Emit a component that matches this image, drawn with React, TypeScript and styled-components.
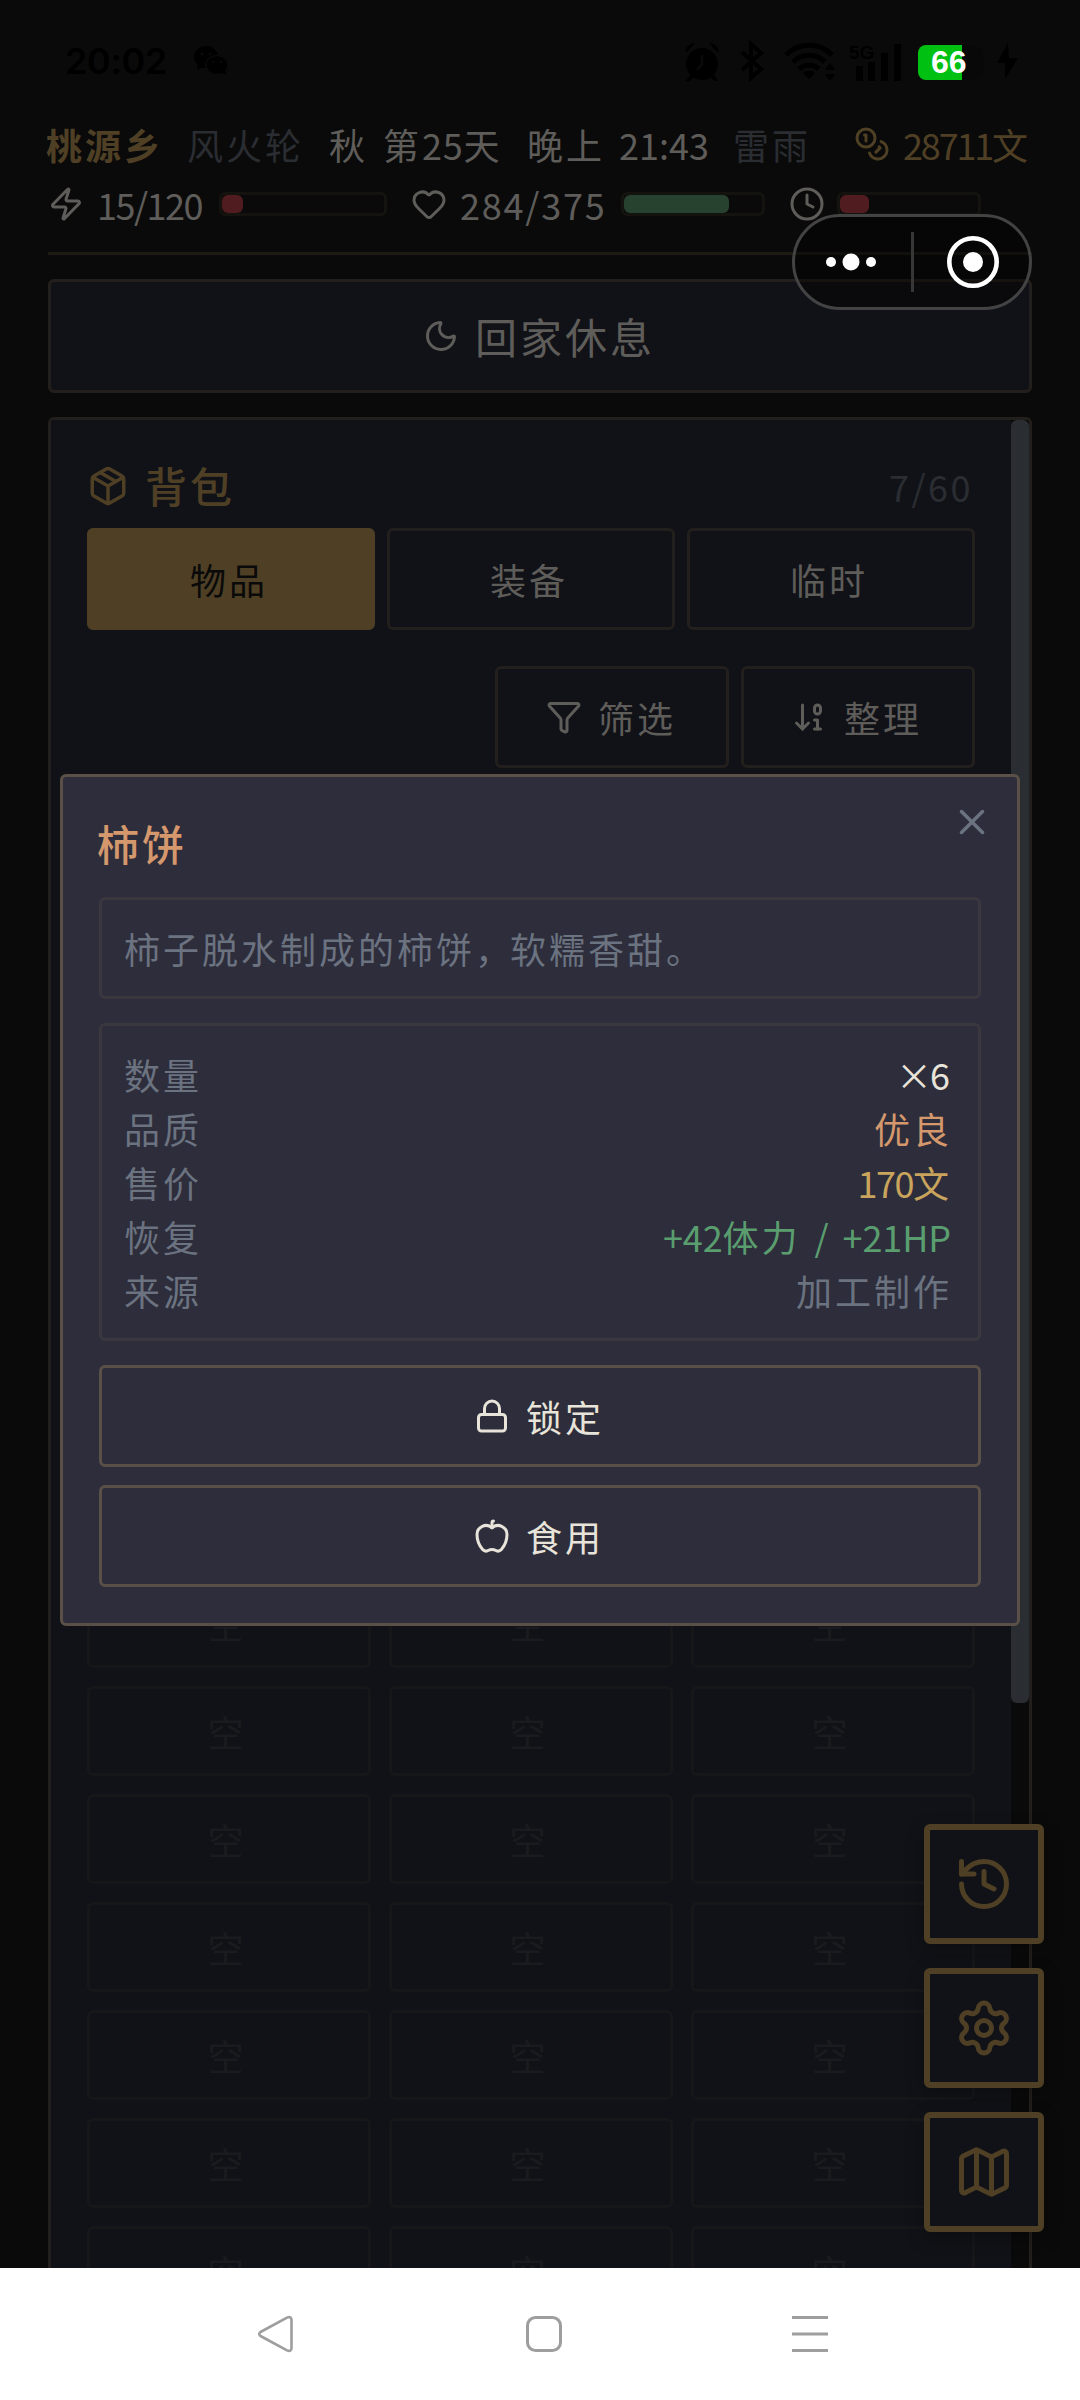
import React from 'react';
import styled, { createGlobalStyle } from 'styled-components';
import {
  Apple, ArrowDown01, Clock, Funnel, Heart, History, Lock, Map as MapIcon,
  Moon, Package, Settings, X, Zap,
} from 'lucide-react';

const c = {
  bg: '#0a0a0a',
  panel: '#111217',
  line: '#231f1c',
  headLine: '#1e1b14',
  text: '#5f5d5a',
  muted: '#2a2d32',
  gold: '#4f4025',
  faint: '#1a1b1f',
  faintLine: '#17171a',
  modal: '#2d2d3b',
  modalLine: '#5a5047',
  innerLine: '#3b373f',
  gray: '#6b7280',
  paper: '#e8e4d9',
};

const Global = createGlobalStyle`
  * { box-sizing: border-box; }
  body { margin: 0; background: ${c.bg}; }
  button { font: inherit; color: inherit; background: none; padding: 0; margin: 0; }
  svg { display: block; flex: none; }
`;

const Screen = styled.div`
  position: relative;
  width: 1080px;
  height: 2400px;
  overflow: hidden;
  display: flex;
  flex-direction: column;
  background: ${c.bg};
  font-family: 'Noto Sans CJK SC', 'Noto Sans', sans-serif;
  font-size: 36px;
  line-height: 48px;
  color: ${c.text};
`;

/* Mixed text: ideographs sit on a 39px grid, latin runs are set tighter. */
const Text = styled.span`
  margin: 0 2px 0 -2px;
`;
const Run = styled.span<{ $ls: number }>`
  letter-spacing: ${(p) => p.$ls}px;
  word-spacing: 6px;
  white-space: pre;
`;
const spacing = (run: string, latin: number) => {
  if (run === '，') return -1;
  return /[\u3000-\uffef]/.test(run) ? 3 : latin;
};
function Txt({ children, ls = 0.8 }: { children: string; ls?: number }) {
  const runs = children.match(/，|[\u3000-\uff0b\uff0d-\uffef]+|[^\u3000-\uffef]+/g) || [];
  return (
    <Text>
      {runs.map((r, i) => <Run key={i} $ls={spacing(r, ls)}>{r}</Run>)}
    </Text>
  );
}

/* ---------- system status bar ---------- */
const StatusBar = styled.div`
  height: 120px;
  padding: 2px 60px 0 65px;
  display: flex;
  align-items: center;
  justify-content: space-between;
  color: #000;
`;
const StatusSide = styled.div<{ $gap: number }>`
  display: flex;
  align-items: center;
  gap: ${(p) => p.$gap}px;
`;
const Time = styled.span`
  font: 600 36px/44px Inter, sans-serif;
  letter-spacing: -0.4px;
`;
const Battery = styled.div`
  width: 66px;
  height: 35px;
  margin: 2px -5px 0 -1px;
  border-radius: 8px 12px 12px 8px;
  background: linear-gradient(90deg, #00c011 0 44px, #080808 44px);
  color: #fff;
  font: 700 32px/35px 'Liberation Sans', Arial, sans-serif;
  letter-spacing: 0;
  padding-left: 13px;
`;

function StatusIcons() {
  return (
    <svg width="222" height="42" viewBox="0 0 222 42" fill="#000">
      <circle cx="20" cy="24" r="16" />
      <path d="M3 12a10 10 0 0 1 10-9l-8 9zM37 12A10 10 0 0 0 27 3l8 9zM8 35l-4 6h4l4-4zM32 35l4 6h-4l-4-4z" />
      <path d="M20 15v9l-5 6" stroke="#0a0a0a" strokeWidth="2.5" fill="none" />
      <path d="M60 12l19 17-10 9V4l10 9-19 17" stroke="#000" strokeWidth="4" fill="none" />
      <path d="M104 15c13-13 34-13 46 0M111 22c9-9 23-9 32 0M117 29c6-5 14-5 20 0" stroke="#000" strokeWidth="5" fill="none" />
      <path d="M127 39l-6-6c3-3 9-3 12 0zM148 23l5 7h-10zM148 41l5-7h-10z" />
      <text x="167" y="19" fontFamily="Liberation Sans, Arial" fontWeight="700" fontSize="19">5G</text>
      <path d="M174 26h7v15h-7zM186 22h7v19h-7zM199 13h7v28h-7zM212 4h7v37h-7z" />
    </svg>
  );
}

/* ---------- game header ---------- */
const Header = styled.header`
  margin: 0 48px;
  height: 135px;
  border-bottom: 3px solid ${c.headLine};
`;
const InfoRow = styled.div`
  display: flex;
  align-items: center;
  height: 48px;
`;
const Info = styled.span<{ $w?: number; $color?: string; $bold?: boolean }>`
  width: ${(p) => (p.$w ? `${p.$w}px` : 'auto')};
  color: ${(p) => p.$color || c.text};
  font-weight: ${(p) => (p.$bold ? 700 : 400)};
  white-space: nowrap;
`;
const Money = styled.div`
  display: flex;
  align-items: center;
  gap: 15px;
  margin: 0 -1px 0 auto;
  color: ${c.gold};
`;
const MeterRow = styled.div`
  display: flex;
  align-items: center;
  gap: 24px;
  height: 48px;
  margin-top: 13px;
  padding-bottom: 2px;
`;
const Meter = styled.div`
  display: flex;
  align-items: center;
  gap: 12px;
`;
const MeterText = styled.span<{ $w: number }>`
  width: ${(p) => p.$w}px;
  padding-left: 3px;
  white-space: nowrap;
`;
const Track = styled.div<{ $w: number }>`
  width: ${(p) => p.$w}px;
  height: 24px;
  border: 3px solid #14130f;
  border-radius: 6px;
`;
const Fill = styled.div<{ $color: string }>`
  height: 18px;
  border-radius: 6px;
  background: ${(p) => p.$color};
`;

function CoinsIcon() {
  return (
    <svg width="36" height="36" viewBox="0 0 24 24" fill="none" stroke="currentColor" strokeWidth="2" strokeLinecap="round" strokeLinejoin="round">
      <circle cx="8" cy="8" r="6" />
      <path d="M18.09 10.37A6 6 0 1 1 10.34 18M7 6h1v4M16.71 13.88l.7.71-2.82 2.82" />
    </svg>
  );
}

/* ---------- page body ---------- */
const RestButton = styled.button`
  margin: 24px 48px 0;
  height: 114px;
  flex: none;
  border: 3px solid ${c.line};
  border-radius: 6px;
  background: ${c.panel};
  display: flex;
  align-items: center;
  justify-content: center;
  gap: 18px;
  font-size: 42px;
`;
const Panel = styled.section`
  margin: 24px 48px 0;
  flex: 1;
  min-height: 0;
  overflow: hidden;
  display: flex;
  border: 3px solid ${c.line};
  border-bottom: 0;
  border-radius: 6px 6px 0 0;
`;
const PanelBody = styled.div`
  width: 960px;
  padding: 36px;
  background: ${c.panel};
`;
const Scrollbar = styled.div`
  width: 18px;
  background: ${c.bg};
`;
const Thumb = styled.div`
  height: 1283px;
  border-radius: 6px;
  background: #2a2d32;
`;
const PanelHead = styled.div`
  display: flex;
  align-items: center;
  justify-content: space-between;
  height: 60px;
`;
const PanelTitle = styled.h2`
  display: flex;
  align-items: center;
  gap: 18px;
  margin: 0;
  font-size: 42px;
  line-height: 46px;
  font-weight: 500;
  color: ${c.gold};

  ${Text} { padding-bottom: 2px; }
`;
const Tabs = styled.div`
  display: grid;
  grid-template-columns: repeat(3, 1fr);
  gap: 12px;
  margin-top: 12px;
`;
const Tab = styled.button<{ $on?: boolean }>`
  height: 102px;
  border: 3px solid ${(p) => (p.$on ? c.gold : c.line)};
  border-radius: 6px;
  background: ${(p) => (p.$on ? c.gold : 'transparent')};
  color: ${(p) => (p.$on ? '#0a0a0a' : c.text)};
`;
const Tools = styled.div`
  display: flex;
  justify-content: flex-end;
  gap: 12px;
  margin-top: 36px;
`;
const Tool = styled.button`
  width: 234px;
  height: 102px;
  border: 3px solid ${c.line};
  border-radius: 6px;
  display: flex;
  align-items: center;
  justify-content: center;
  gap: 18px;
`;
const Grid = styled.div`
  display: grid;
  grid-template-columns: repeat(3, 1fr);
  grid-auto-rows: 90px;
  gap: 18px;
  margin-top: 810px;
`;
const Slot = styled.div`
  display: flex;
  align-items: center;
  justify-content: center;
  border: 3px solid ${c.faintLine};
  border-radius: 6px;
  color: ${c.faint};
`;

/* ---------- floating layers ---------- */
const Capsule = styled.div`
  position: absolute;
  left: 792px;
  top: 214px;
  width: 240px;
  height: 96px;
  border: 3px solid #434343;
  border-radius: 48px;
  background: rgba(0, 0, 0, 0.4);
`;
const Fabs = styled.div`
  position: absolute;
  right: 36px;
  top: 1824px;
  display: flex;
  flex-direction: column;
  gap: 24px;
`;
const Fab = styled.button`
  width: 120px;
  height: 120px;
  border: 6px solid ${c.gold};
  border-radius: 6px;
  background: ${c.panel};
  color: ${c.gold};
  display: flex;
  align-items: center;
  justify-content: center;
  box-shadow: 0 6px 18px rgba(0, 0, 0, 0.3);
`;

const Modal = styled.div`
  position: absolute;
  left: 60px;
  top: 774px;
  width: 960px;
  height: 852px;
  padding: 36px;
  border: 3px solid ${c.modalLine};
  border-radius: 6px;
  background: ${c.modal};
  color: ${c.gray};
`;
const ModalTitle = styled.h3`
  margin: 0;
  height: 60px;
  line-height: 60px;
  font-size: 42px;
  font-weight: 500;
  color: #d4986c;
`;
const Close = styled.button`
  position: absolute;
  top: 24px;
  right: 24px;
  border: 0;
  color: ${c.gray};
`;
const Box = styled.div`
  margin-top: 24px;
  padding: 24px;
  border: 3px solid ${c.innerLine};
  border-radius: 6px;
`;
const Stats = styled(Box)`
  display: flex;
  flex-direction: column;
  gap: 6px;
`;
const Stat = styled.div`
  display: flex;
  justify-content: space-between;
`;
const Value = styled.span<{ $color: string; $inset?: number }>`
  color: ${(p) => p.$color};
  padding-right: ${(p) => p.$inset || 0}px;
`;
const Actions = styled.div`
  display: flex;
  flex-direction: column;
  gap: 18px;
  margin-top: 24px;
`;
const Action = styled.button`
  height: 102px;
  border: 3px solid ${c.modalLine};
  border-radius: 6px;
  color: ${c.paper};
  display: flex;
  align-items: center;
  justify-content: center;
  gap: 18px;
`;

const NavBar = styled.nav`
  flex: none;
  height: 132px;
  padding: 0 252px 0 256px;
  display: flex;
  align-items: center;
  justify-content: space-between;
  background: #fff;
`;

const stats = [
  { label: '数量', value: '×6', color: c.paper, ls: -2, inset: 4 },
  { label: '品质', value: '优良', color: '#d4986c' },
  { label: '售价', value: '170文', color: '#c8a45c', ls: -1.5 },
  { label: '恢复', value: '+42体力 / +21HP', color: '#5a9e6f', ls: -0.1, inset: 1 },
  { label: '来源', value: '加工制作', color: c.gray },
];

export default function App() {
  return (
    <Screen>
      <Global />
      <StatusBar>
        <StatusSide $gap={26}>
          <Time>20:02</Time>
          <svg width="36" height="32" viewBox="0 0 36 32" fill="#000">
            <ellipse cx="13" cy="12" rx="12" ry="11" />
            <path d="M5 19l-1 6 7-3z" />
            <ellipse cx="24" cy="20" rx="11" ry="9.5" stroke="#0a0a0a" strokeWidth="1.5" />
            <path d="M27 27l6 3-1-5z" />
            <g fill="#0a0a0a">
              <circle cx="9" cy="9" r="1.5" /><circle cx="17" cy="9" r="1.5" />
              <circle cx="20" cy="17" r="1.3" /><circle cx="28" cy="17" r="1.3" />
            </g>
          </svg>
        </StatusSide>
        <StatusSide $gap={15}>
          <StatusIcons />
          <Battery>66</Battery>
          <svg width="26" height="38" viewBox="0 0 26 38" fill="#000">
            <path d="M14 1L3 21h8v16L24 16h-9z" />
          </svg>
        </StatusSide>
      </StatusBar>

      <Header>
        <InfoRow>
          <Info $w={141} $color={c.gold} $bold><Txt>桃源乡</Txt></Info>
          <Info $w={142} $color={c.muted}><Txt>风火轮</Txt></Info>
          <Info $w={198}><Txt ls={0.8}>秋 第25天</Txt></Info>
          <Info $w={206}><Txt ls={0}>晚上 21:43</Txt></Info>
          <Info $color={c.muted}><Txt>雷雨</Txt></Info>
          <Money>
            <CoinsIcon />
            <Info $color={c.gold}><Txt ls={-2.2}>28711文</Txt></Info>
          </Money>
        </InfoRow>
        <MeterRow>
          <Meter>
            <Zap size={36} />
            <MeterText $w={111}><Txt ls={-1.5}>15/120</Txt></MeterText>
            <Track $w={168}><Fill $color="#501c1f" style={{ width: `${(15 / 120) * 100 + 0.5}%` }} /></Track>
          </Meter>
          <Meter>
            <Heart size={36} />
            <MeterText $w={150}><Txt ls={1.8}>284/375</Txt></MeterText>
            <Track $w={144}><Fill $color="#27422f" style={{ width: `${(284 / 375) * 100}%` }} /></Track>
          </Meter>
          <Meter>
            <Clock size={36} />
            <Track $w={144}><Fill $color="#501c1f" style={{ width: '21%' }} /></Track>
          </Meter>
        </MeterRow>
      </Header>

      <RestButton><Moon size={36} /><Txt>回家休息</Txt></RestButton>

      <Panel>
        <PanelBody>
          <PanelHead>
            <PanelTitle><Package size={42} /><Txt>背包</Txt></PanelTitle>
            <Info $color={c.muted}><Txt ls={2.5}>7/60</Txt></Info>
          </PanelHead>
          <Tabs>
            <Tab $on><Txt>物品</Txt></Tab>
            <Tab><Txt>装备</Txt></Tab>
            <Tab><Txt>临时</Txt></Tab>
          </Tabs>
          <Tools>
            <Tool><Funnel size={36} /><Txt>筛选</Txt></Tool>
            <Tool><ArrowDown01 size={36} /><Txt>整理</Txt></Tool>
          </Tools>
          <Grid>
            {Array.from({ length: 21 }, (_, i) => <Slot key={i}><Txt>空</Txt></Slot>)}
          </Grid>
        </PanelBody>
        <Scrollbar><Thumb /></Scrollbar>
      </Panel>

      <NavBar>
        <svg width="40" height="40" viewBox="0 0 40 40" fill="none" stroke="#9e9e9e" strokeWidth="2.6" strokeLinejoin="round">
          <path d="M4.5 18L31 3.6Q35.500 2 35.500 6V34Q35.500 38 31 36.400L4.500 22Q2 20 4.500 18Z" />
        </svg>
        <svg width="40" height="40" viewBox="0 0 40 40" fill="none" stroke="#9e9e9e" strokeWidth="3">
          <rect x="3.500" y="3.500" width="33" height="33" rx="8" />
        </svg>
        <svg width="36" height="40" viewBox="0 0 36 40" fill="#9e9e9e">
          <path d="M0 2h36v3H0zM0 18.500h36v3H0zM0 35h36v3H0z" />
        </svg>
      </NavBar>

      <Fabs>
        <Fab><History size={60} /></Fab>
        <Fab><Settings size={60} /></Fab>
        <Fab><MapIcon size={60} /></Fab>
      </Fabs>

      <Modal>
        <Close><X size={42} /></Close>
        <ModalTitle><Txt>柿饼</Txt></ModalTitle>
        <Box><Txt>柿子脱水制成的柿饼，软糯香甜。</Txt></Box>
        <Stats>
          {stats.map((s) => (
            <Stat key={s.label}>
              <Txt>{s.label}</Txt>
              <Value $color={s.color} $inset={s.inset}><Txt ls={s.ls}>{s.value}</Txt></Value>
            </Stat>
          ))}
        </Stats>
        <Actions>
          <Action><Lock size={36} /><Txt>锁定</Txt></Action>
          <Action><Apple size={36} /><Txt>食用</Txt></Action>
        </Actions>
      </Modal>

      <Capsule>
        <svg width="234" height="90" viewBox="0 0 234 90">
          <g fill="#fff">
            <circle cx="36" cy="45" r="5" />
            <circle cx="56" cy="45" r="8.500" />
            <circle cx="76" cy="45" r="5" />
            <circle cx="178" cy="45" r="10" />
          </g>
          <rect x="116" y="15" width="3" height="60" fill="#373737" />
          <circle cx="178" cy="45" r="23.700" fill="none" stroke="#fff" strokeWidth="4.600" />
        </svg>
      </Capsule>
    </Screen>
  );
}
